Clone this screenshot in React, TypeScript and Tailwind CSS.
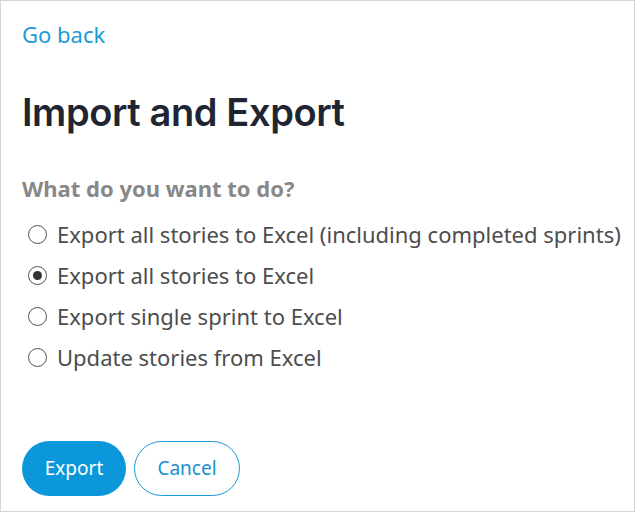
import { useState } from 'react';

const options = [
  'Export all stories to Excel (including completed sprints)',
  'Export all stories to Excel',
  'Export single sprint to Excel',
  'Update stories from Excel',
];

export default function App() {
  const [selected, setSelected] = useState(1);

  return (
    <div className="h-[512px] w-[635px] border border-[#d6d6d6] bg-white font-['Noto_Sans',sans-serif]">
      <div className="px-[21px] pt-[18px]">
        <a href="#" className="block text-[22px] leading-[30px] text-[#1a9ad9]">
          Go back
        </a>

        <h1 className="mt-[40px] font-['Inter',sans-serif] text-[38px] leading-[46px] font-semibold tracking-[-0.4px] text-[#1f2533]">
          Import and Export
        </h1>

        <h2 className="mt-[38px] text-[22px] leading-[30px] font-bold text-[#888888]">
          What do you want to do?
        </h2>

        {/* Options */}
        <div className="mt-[11px] flex flex-col">
          {options.map((label, i) => (
            <label
              key={label}
              className="flex h-[41px] cursor-pointer items-center gap-[10px] pl-[6px] text-[22px] whitespace-nowrap text-[#4d4d4d]"
              onClick={() => setSelected(i)}
            >
              <span className="flex h-[19px] w-[19px] shrink-0 items-center justify-center rounded-full border border-[#555555] bg-white">
                {selected === i && <span className="h-[9px] w-[9px] rounded-full bg-[#333333]" />}
              </span>
              {label}
            </label>
          ))}
        </div>

        <div className="mt-[63px] flex gap-[8px]">
          <button className="h-[55px] w-[104px] rounded-full bg-[#0b97da] text-[19px] text-white">
            Export
          </button>
          <button className="h-[55px] w-[106px] rounded-full border border-[#1a9ad9] bg-white text-[19px] text-[#1a8fd0]">
            Cancel
          </button>
        </div>
      </div>
    </div>
  );
}
